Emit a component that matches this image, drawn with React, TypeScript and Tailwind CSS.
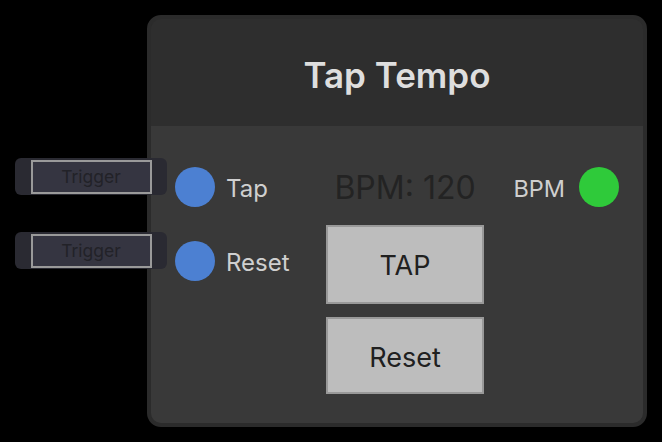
import React from "react";

function Trigger() {
  return (
    <div className="flex h-[37px] w-[152px] items-center justify-center rounded-[6px] bg-[#2a2a32]">
      <div className="flex h-[34px] w-[121px] items-center justify-center border-2 border-[#9a9a9a] bg-[#353541] pt-[2px] text-[17.5px] text-[#222228]">
        Trigger
      </div>
    </div>
  );
}

function Port({ label }: { label: string }) {
  return (
    <div className="flex h-[40px] items-center gap-[11px]">
      <div className="h-[40px] w-[40px] rounded-full bg-[#4c80d2]" />
      <span className="pt-[3px] text-[24px] text-[#cfcfcf]">{label}</span>
    </div>
  );
}

export default function App() {
  return (
    <div
      className="relative h-[442px] w-[662px] overflow-hidden bg-black"
      style={{ fontFamily: "Inter, 'Noto Sans', sans-serif" }}
    >
      <div className="absolute left-[147px] top-[15px] flex h-[412px] w-[500px] flex-col overflow-hidden rounded-[14px] border-4 border-[#2b2b2b] bg-[#2e2e2e]">
        <div className="flex h-[107px] items-center justify-center pt-[5px]">
          <span className="text-[35px] font-semibold text-[#dedede]">Tap Tempo</span>
        </div>
        <div className="flex flex-1 bg-[#393939] pl-[24px] pr-[24px] pt-[41px]">
          <div className="flex w-[151px] flex-col gap-[34px]">
            <Port label="Tap" />
            <Port label="Reset" />
          </div>
          <div className="flex w-[158px] flex-col">
            <div className="flex h-[40px] items-center justify-center pt-[2px] text-[32px] text-[#232323]">
              BPM: 120
            </div>
            <button className="mt-[18px] flex h-[79px] items-center justify-center border-2 border-[#999999] bg-[#bdbdbd] pt-[4px] text-[27px] text-[#202020]">
              TAP
            </button>
            <button className="mt-[13px] flex h-[77px] items-center justify-center border-2 border-[#999999] bg-[#bdbdbd] pt-[5px] text-[27px] text-[#202020]">
              Reset
            </button>
          </div>
          <div className="flex flex-1 justify-end">
            <div className="flex h-[40px] items-center gap-[14px]">
              <span className="pt-[3px] text-[23.5px] text-[#cfcfcf]">BPM</span>
              <div className="h-[40px] w-[40px] rounded-full bg-[#2fca3a]" />
            </div>
          </div>
        </div>
      </div>
      <div className="absolute left-[15px] top-[158px]">
        <Trigger />
      </div>
      <div className="absolute left-[15px] top-[232px]">
        <Trigger />
      </div>
    </div>
  );
}
